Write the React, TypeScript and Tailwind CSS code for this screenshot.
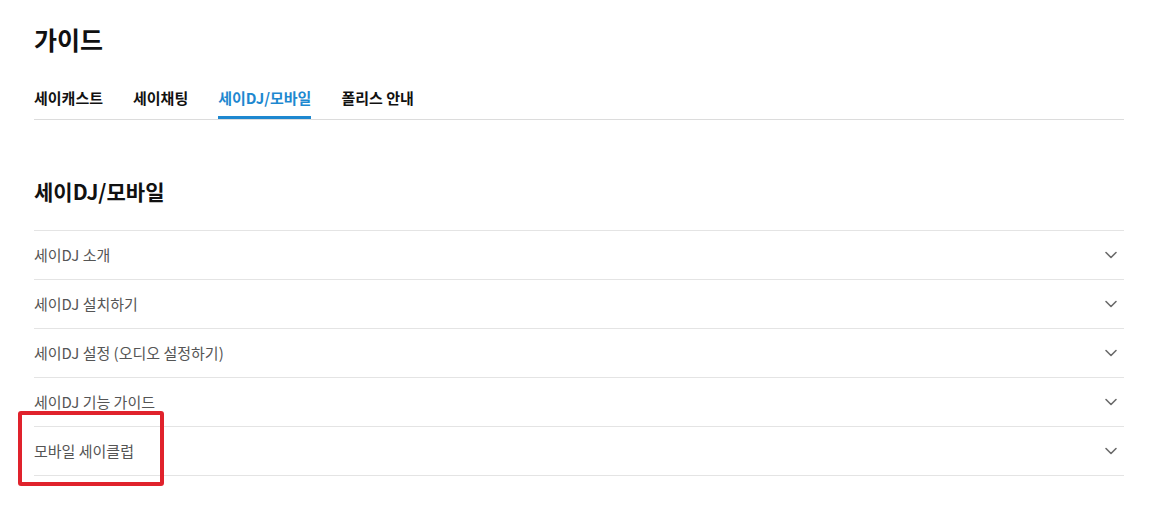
import React from "react";

const tabs = ["세이캐스트", "세이채팅", "세이DJ/모바일", "폴리스 안내"];
const items = [
  "세이DJ 소개",
  "세이DJ 설치하기",
  "세이DJ 설정 (오디오 설정하기)",
  "세이DJ 기능 가이드",
  "모바일 세이클럽",
];

function Chevron() {
  return (
    <svg width="14" height="14" viewBox="0 0 14 14" fill="none">
      <path d="M2 4.5 L7 9.5 L12 4.5" stroke="#6b6b6b" strokeWidth="1.6" strokeLinecap="round" strokeLinejoin="round" />
    </svg>
  );
}

export default function App() {
  return (
    <div
      className="relative w-[1172px] h-[532px] bg-white overflow-hidden"
      style={{ fontFamily: '"Noto Sans CJK KR", "Noto Sans", sans-serif' }}
    >
      <div className="px-[34px] pt-[22px] w-[1158px]">
        <h1 className="text-[25px] leading-[35px] font-bold text-[#111]">가이드</h1>
        <div className="mt-[30px] flex gap-[30px] border-b border-[#dcdcdc]">
          {tabs.map((t, i) => (
            <div
              key={t}
              className={
                "text-[15px] leading-[21px] font-bold pb-[8px] border-b-[3px] " +
                (i === 2 ? "text-[#1e88d0] border-[#1e88d0]" : "text-[#111] border-transparent")
              }
            >
              {t}
            </div>
          ))}
        </div>
        <h2 className="mt-[57px] text-[21px] leading-[29px] font-bold text-[#111]">세이DJ/모바일</h2>
        <div className="mt-[24px] border-b border-[#e4e4e4]">
          {items.map((it) => (
            <div
              key={it}
              className="h-[49px] border-t border-[#e4e4e4] flex items-center justify-between"
            >
              <span className="text-[15px] text-[#555]">{it}</span>
              <span className="mr-[6px] flex items-center">
                <Chevron />
              </span>
            </div>
          ))}
        </div>
      </div>
      <div className="absolute left-[18px] top-[411px] w-[146px] h-[75px] border-4 border-[#e0222c] rounded-[3px]" />
    </div>
  );
}
